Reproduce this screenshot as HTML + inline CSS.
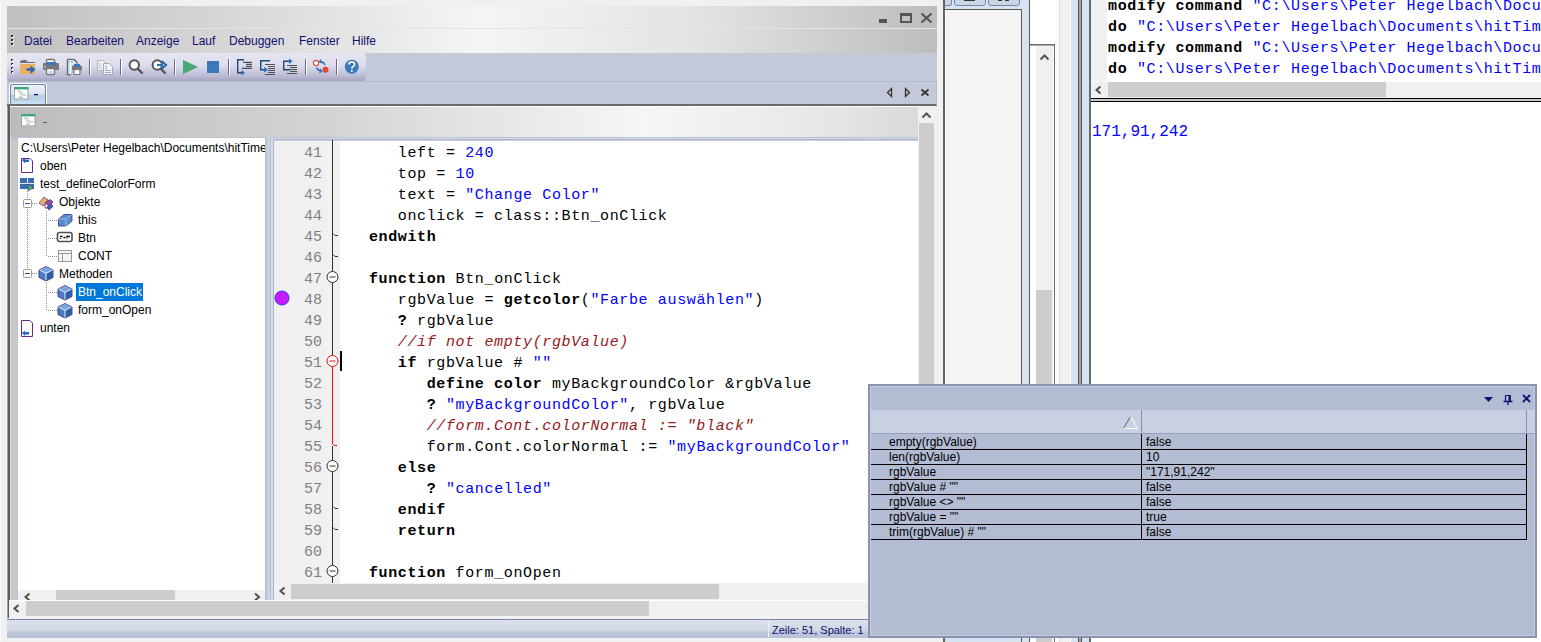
<!DOCTYPE html>
<html><head><meta charset="utf-8">
<style>
*{margin:0;padding:0;box-sizing:border-box}
html,body{width:1541px;height:642px;overflow:hidden;background:#f0f0f0;font-family:"Liberation Sans",sans-serif;position:relative}
.a{position:absolute}
.mono{font-family:"Liberation Mono",monospace}
.gt{background:linear-gradient(90deg,#c0c0c0 0%,#d8d8d8 25%,#f5f5f5 51%,#e2e2e2 75%,#bdbdbd 100%)}
.gt2{background:linear-gradient(90deg,#bcbcbc 0%,#d4d4d4 35%,#f6f6f6 70%,#e8e8e8 88%,#dadada 100%)}
.code{position:absolute;left:341px;font-family:"Liberation Mono",monospace;font-size:16px;line-height:21px;white-space:pre;color:#000}
.code div{height:21px}
.b{font-weight:bold}
.s{color:#0000ff}
.c{color:#961818;font-style:italic}
.ln{position:absolute;left:274px;width:48px;text-align:right;font-family:"Liberation Mono",monospace;font-size:15px;line-height:21px;color:#808080;white-space:pre}
.menu span{position:absolute;top:34px;font-size:12px;color:#10106e;line-height:14px}
.tree div{position:absolute;font-size:12px;line-height:16px;color:#000;white-space:nowrap}
.row{position:absolute;left:871px;width:656px;height:16px;border-bottom:1px solid #000;font-size:12px;line-height:14px;color:#000}
.row span{position:absolute;left:18px;top:1px}
.row i{position:absolute;left:275px;top:1px;font-style:normal}
</style></head><body>
<!-- left gradient strip on far left -->
<div class="a" style="left:0;top:0;width:1px;height:642px;background:#fafafa"></div>

<!-- ===== MAIN WINDOW ===== -->
<div class="a gt" style="left:7px;top:6px;width:930px;height:22px"></div>
<div class="a" style="left:7px;top:28px;width:930px;height:1px;background:#e4e4e4"></div>
<div class="a gt" style="left:7px;top:29px;width:930px;height:24px"></div>
<!-- title buttons -->
<div class="a" style="left:879px;top:19px;width:8px;height:4px;background:#555"></div>
<div class="a" style="left:900px;top:13px;width:12px;height:10px;border:2px solid #555;border-top-width:3px"></div>
<svg class="a" style="left:920px;top:12px" width="13" height="12"><path d="M1.5 1.5 L11.5 10.5 M11.5 1.5 L1.5 10.5" stroke="#555" stroke-width="2.2"/></svg>

<!-- menu -->
<div class="a" style="left:12px;top:36px;width:2px;height:11px;background:repeating-linear-gradient(#fff 0 2px,transparent 2px 4px)"></div><div class="a" style="left:11px;top:35px;width:2px;height:11px;background:repeating-linear-gradient(#2a2a5a 0 2px,transparent 2px 4px)"></div>
<div class="menu">
<span style="left:24px">Datei</span><span style="left:66px">Bearbeiten</span><span style="left:136px">Anzeige</span><span style="left:192px">Lauf</span><span style="left:229px">Debuggen</span><span style="left:299px">Fenster</span><span style="left:352px">Hilfe</span>
</div>

<!-- toolbar strip bg -->
<div class="a" style="left:7px;top:53px;width:930px;height:52px;background:#c4c9d9"></div>
<div class="a" style="left:7px;top:53px;width:359px;height:28px;border-radius:3px;background:linear-gradient(#e6e6f2 0%,#dcdcec 45%,#b8b8d2 85%,#a4a4c0 100%)"></div>


<!-- toolbar icons -->
<svg class="a" style="left:7px;top:53px" width="360" height="28" viewBox="7 53 360 28">
 <g fill="#2a2a5a"><rect x="11" y="59" width="2" height="2"/><rect x="11" y="63" width="2" height="2"/><rect x="11" y="67" width="2" height="2"/><rect x="11" y="71" width="2" height="2"/></g>
 <g fill="#fff"><rect x="12" y="60" width="1.5" height="1.5"/><rect x="12" y="64" width="1.5" height="1.5"/><rect x="12" y="68" width="1.5" height="1.5"/><rect x="12" y="72" width="1.5" height="1.5"/></g>
 <!-- folder -->
 <path d="M20 61.5 Q21 60 23 60 H26 L28 62 H35 V63 H20 Z" fill="#707070"/>
 <rect x="20" y="64" width="15" height="10" rx="1" fill="#e8b060"/>
 <path d="M26.5 69.5 H32" stroke="#2a6ab8" stroke-width="2.6"/>
 <path d="M30.5 65.5 L35.5 69.5 L30.5 74 Z" fill="#2a6ab8"/>
 <!-- printer -->
 <rect x="46.5" y="59.5" width="8" height="5" rx="1" fill="#fff" stroke="#777" stroke-width="1.4"/>
 <rect x="43" y="63" width="16" height="7" rx="1" fill="#787878"/>
 <rect x="46" y="62" width="10" height="3" fill="#3a78c0"/>
 <rect x="46.5" y="68.5" width="8" height="6" rx="1" fill="#fff" stroke="#777" stroke-width="1.4"/>
 <path d="M48.5 72 H52.5" stroke="#5a8ad0" stroke-width="0.8"/>
 <rect x="44" y="66.5" width="2" height="1" fill="#ccc"/>
 <!-- print preview -->
 <path d="M67.5 59.5 H74 L77 62.5 V64 M67.5 59.5 V74.5 H71" fill="#fff" stroke="#707070" stroke-width="1.3"/>
 <rect x="68" y="60" width="3" height="14" fill="#fff"/>
 <path d="M69 60.5 V74 M68.5 61.5 H73.5" stroke="#70c0f0" stroke-width="0.9"/>
 <path d="M67.5 59.5 H74 L77 62.5 M67.5 59.5 V74.5 H70" fill="none" stroke="#6a6a6a" stroke-width="1.2"/>
 <rect x="72" y="65.5" width="10" height="5" rx="1" fill="#777"/>
 <rect x="74" y="64" width="6" height="3" fill="#3a78c0"/>
 <rect x="74" y="69.5" width="6" height="5" rx="1" fill="#fff" stroke="#777" stroke-width="1.2"/>
 <!-- separators -->
 <g><path d="M89.5 59 V75 M120.5 59 V75 M174.5 59 V75 M228.5 59 V75 M305.5 59 V75 M336.5 59 V75" stroke="#6a6a8a" stroke-width="1"/>
 <path d="M90.5 59 V75 M121.5 59 V75 M175.5 59 V75 M229.5 59 V75 M306.5 59 V75 M337.5 59 V75" stroke="#fff" stroke-width="1"/></g>
 <!-- copy disabled -->
 <path d="M97.5 60.5 H103 L105 62.5 V70.5 H97.5 Z" fill="#f2f2f6" stroke="#b4b4c0"/>
 <path d="M99 64 H101 M99 66 H101 M99 68 H102" stroke="#a8b8d8"/>
 <path d="M103.5 63.5 H109.5 L112.5 66.5 V74.5 H103.5 Z" fill="#f4f4f8" stroke="#a8a8b4"/>
 <path d="M105 66.5 H107 M105 68.5 H107 M105 70.5 H111 M105 72.5 H111" stroke="#90a8d4"/>
 <!-- search -->
 <circle cx="134.3" cy="65" r="4.7" fill="#fff" stroke="#555" stroke-width="2"/>
 <path d="M137.5 68.5 L142.5 73.5" stroke="#555" stroke-width="2.4"/>
 <!-- search next -->
 <circle cx="157.3" cy="65" r="4.7" fill="#fff" stroke="#555" stroke-width="2"/>
 <path d="M160.5 68.5 L165.5 73.5" stroke="#555" stroke-width="2.4"/>
 <path d="M157 65 H163" stroke="#2a6ab8" stroke-width="2"/>
 <path d="M161.5 61 L166 65 L161.5 69" stroke="#2a6ab8" stroke-width="2.2" fill="none"/>
 <!-- play -->
 <path d="M183 60 L198 67 L183 74 Z" fill="#48a878"/>
 <!-- stop -->
 <rect x="207" y="61" width="12" height="12" fill="#3a78b8"/>
 <!-- indent icons -->
 <g stroke="#1e4a78" stroke-width="1.4" fill="none">
  <path d="M244 59.8 H237.7 V72.8 H242"/>
  <path d="M270 60.8 H260.7 V69.8 H264"/>
  <path d="M290 69.8 H283.7 V61.3 H289"/>
 </g>
 <g fill="#2a6ab8"><path d="M241.5 70 L245 72.8 L241.5 75.6 Z"/><path d="M264 67 L268 69.8 L264 72.6 Z"/><path d="M289 58.5 L292.5 61.3 L289 64 Z"/></g>
 <g stroke="#505050" stroke-width="1.2">
  <path d="M243 62.3 H252 M246 64.3 H252 M246 66.3 H252 M242 68.3 H252"/>
  <path d="M265 64.5 H275 M268 66.5 H275 M268 68.5 H275 M268 70.5 H275 M268 72.5 H275 M265 74.5 H275"/>
  <path d="M287 65.5 H297 M290 67.5 H297 M290 69.5 H297 M290 71.5 H297 M287 73.5 H297"/>
 </g>
 <!-- breakpoints -->
 <circle cx="316" cy="63" r="2.6" fill="#fff" stroke="#e05040" stroke-width="1.2"/>
 <circle cx="325.5" cy="69.8" r="3" fill="#e04a30"/>
 <path d="M325 65 Q324 62 320.5 61.5" stroke="#2a6ab8" stroke-width="1.3" fill="none"/><path d="M321 59.5 L319.5 61.8 L322 63" stroke="#2a6ab8" stroke-width="1.2" fill="none"/>
 <path d="M316.5 67.5 Q317.5 70.5 321 71" stroke="#2a6ab8" stroke-width="1.3" fill="none"/><path d="M320 69 L321.5 71 L319.5 73" stroke="#2a6ab8" stroke-width="1.2" fill="none"/>
 <!-- help -->
 <circle cx="351.8" cy="66.8" r="7" fill="#3a78b8"/>
 <path d="M349 64.5 Q349 62 351.8 62 Q354.6 62 354.6 64.5 Q354.6 66 352.8 66.8 Q351.8 67.3 351.8 68.8" stroke="#fff" stroke-width="1.6" fill="none"/>
 <rect x="350.9" y="70" width="1.8" height="1.8" fill="#fff"/>
</svg>
<!-- tab strip -->
<div class="a" style="left:7px;top:81px;width:930px;height:1px;background:#b4bacc"></div>
<div class="a" style="left:9px;top:83px;width:38px;height:22px;border:1px solid #fff;border-bottom:none;border-radius:4px 4px 0 0"></div><div class="a" style="left:10px;top:84px;width:36px;height:21px;border:1px solid #6e86b0;border-bottom:none;border-radius:3px 3px 0 0;background:linear-gradient(#eef2f8 0%,#dde4f0 45%,#bccde4 52%,#c0d6ea 80%,#c8eef6 100%)"></div>
<div class="a" style="left:7px;top:104px;width:930px;height:2px;background:#6a6a6a"></div>

<!-- child window -->
<div class="a" style="left:7px;top:106px;width:1px;height:512px;background:#a0a0a8"></div><div class="a" style="left:8px;top:106px;width:2px;height:512px;background:#5a5a64"></div>
<div class="a" style="left:10px;top:106px;width:927px;height:512px;background:#c8c8c8"></div>
<div class="a" style="left:10px;top:106px;width:927px;height:1px;background:#fff"></div>
<div class="a gt2" style="left:11px;top:107px;width:907px;height:30px"></div>
<div class="a" style="left:11px;top:137px;width:907px;height:3px;background:#b8c4d4"></div>


<!-- tab icon / title icon -->
<svg class="a" style="left:0;top:80px" width="940" height="60" viewBox="0 80 940 60">
 <defs><g id="fi"><rect x="0.5" y="0.5" width="13.5" height="11.5" fill="#fff" stroke="#a0a0a0"/><rect x="0" y="0" width="14.5" height="2.4" fill="#40a878"/>
 <path d="M3 4 H6.5 L8.5 7 L10 8 H12.5 M4.5 5 L7.5 8.5 L5 10.5 H9" stroke="#b8b8b8" stroke-width="1" fill="none"/><circle cx="7.5" cy="6" r="1" fill="#ccc"/><circle cx="9.5" cy="8" r="1" fill="#ccc"/></g></defs>
 <use href="#fi" x="14" y="87"/>
 <rect x="34" y="94" width="4" height="1.2" fill="#10106a"/>
 <use href="#fi" x="21" y="114"/>
 <rect x="43" y="122" width="4" height="1" fill="#606080"/>
 <g stroke="#333" stroke-width="1.3" fill="none" stroke-linejoin="miter">
  <path d="M891.5 88.5 V96.5 L887.5 92.5 Z"/>
  <path d="M905.5 88.5 V96.5 L909.5 92.5 Z"/>
  <path d="M921.5 89.5 L928.5 95.5 M928.5 89.5 L921.5 95.5" stroke-width="1.7"/>
 </g>
</svg>
<div class="a" style="left:936px;top:81px;width:1px;height:24px;background:#b0bccc"></div>
<div class="a" style="left:10px;top:137px;width:1px;height:463px;background:#dcdcdc"></div>
<!-- tree panel -->
<div class="a" style="left:17px;top:137px;width:250px;height:463px;background:#b8c4d4"></div>
<div class="a" style="left:18px;top:138px;width:247px;height:462px;background:#fff"></div>
<!-- splitter -->
<div class="a" style="left:267px;top:137px;width:3px;height:463px;background:#c8d2e0"></div>

<!-- editor panel -->
<div class="a" style="left:270px;top:137px;width:648px;height:463px;background:#b8c4d4"></div>
<div class="a" style="left:271px;top:138px;width:647px;height:462px;background:#d4dce8"></div>
<div class="a" style="left:273px;top:139px;width:645px;height:461px;background:#aab6c8"></div>
<div class="a" style="left:274px;top:140px;width:644px;height:443px;background:#fff"></div>
<div class="a" style="left:274px;top:140px;width:51px;height:443px;background:#f0f0f0"></div>
<div class="a" style="left:325px;top:140px;width:15px;height:443px;background:repeating-conic-gradient(#e8e8e8 0 25%,#fafafa 0 50%) 0 0/2px 2px"></div>

<div class="a" style="left:274px;top:140px;width:644px;height:443px;overflow:hidden">
<div class="code" style="left:66px;top:3px;letter-spacing:0.63px;font-size:15px"><div>      left = <span class="s">240</span></div><div>      top = <span class="s">10</span></div><div>      text = <span class="s">"Change Color"</span></div><div>      onclick = class::Btn_onClick</div><div>   <span class="b">endwith</span></div><div></div><div>   <span class="b">function</span> Btn_onClick</div><div>      rgbValue = <span class="b">getcolor</span>(<span class="s">"Farbe auswählen"</span>)</div><div>      <span class="b">?</span> rgbValue</div><div>      <span class="c">//if not empty(rgbValue)</span></div><div>      <span class="b">if</span> rgbValue # <span class="s">""</span></div><div>         <span class="b">define color</span> myBackgroundColor &amp;rgbValue</div><div>         <span class="b">?</span> <span class="s">"myBackgroundColor"</span>, rgbValue</div><div>         <span class="c">//form.Cont.colorNormal := "black"</span></div><div>         form.Cont.colorNormal := <span class="s">"myBackgroundColor"</span></div><div>      <span class="b">else</span></div><div>         <span class="b">?</span> <span class="s">"cancelled"</span></div><div>      <span class="b">endif</span></div><div>      <span class="b">return</span></div><div></div><div>   <span class="b">function</span> form_onOpen</div></div>
<div class="ln" style="left:0;top:3px"><div>41</div><div>42</div><div>43</div><div>44</div><div>45</div><div>46</div><div>47</div><div>48</div><div>49</div><div>50</div><div>51</div><div>52</div><div>53</div><div>54</div><div>55</div><div>56</div><div>57</div><div>58</div><div>59</div><div>60</div><div>61</div></div>
</div>

<div class="a" style="left:274px;top:140px;width:644px;height:1px;background:#c8d0dc"></div>
<!-- fold margin -->
<svg class="a" style="left:274px;top:140px" width="644" height="443" viewBox="274 140 644 443">
 <g stroke="#333" stroke-width="1" fill="none">
  <path d="M332.5 140 V272 M332.5 282 V356 M332.5 446 V461 M332.5 471 V566 M332.5 576 V583"/>
  <path d="M333 233.5 L335 235.5 H338 M333 254.5 L335 256.5 H338 M333 506.5 L335 508.5 H338 M333 527.5 L335 529.5 H338"/>
  <circle cx="332.5" cy="277" r="5.5" fill="#fff"/><path d="M329.5 277 H335.5"/>
  <circle cx="332.5" cy="466" r="5.5" fill="#fff"/><path d="M329.5 466 H335.5"/>
  <circle cx="332.5" cy="571" r="5.5" fill="#fff"/><path d="M329.5 571 H335.5"/>
 </g>
 <g stroke="#e81010" stroke-width="1" fill="none">
  <path d="M332.5 366 V444 L334.5 445.5 H337"/>
  <circle cx="332.5" cy="361" r="5.5" fill="#fff"/><path d="M329.5 361 H335.5"/>
 </g>
 <circle cx="282" cy="298" r="7" fill="#c41cff" stroke="#3a2aff" stroke-width="1"/>
 <rect x="340" y="351" width="2" height="20" fill="#000"/>
</svg>
<!-- editor hscroll -->
<div class="a" style="left:274px;top:583px;width:644px;height:17px;background:#f0f0f0"></div>
<div class="a" style="left:291px;top:584px;width:428px;height:15px;background:#cdcdcd"></div>
<svg class="a" style="left:278px;top:586px" width="10" height="10"><path d="M6.5 1.5 L2.5 5 L6.5 8.5" stroke="#505050" stroke-width="2" fill="none"/></svg>
<!-- editor vscroll -->
<div class="a" style="left:918px;top:106px;width:19px;height:512px;background:#f0f0f0"></div>
<div class="a" style="left:919px;top:123px;width:15px;height:477px;background:#cdcdcd"></div>
<svg class="a" style="left:921px;top:111px" width="11" height="8"><path d="M1.5 6.5 L5.5 2.5 L9.5 6.5" stroke="#555" stroke-width="2" fill="none"/></svg>



<!-- ===== RIGHT PANELS ===== -->
<!-- panel A -->
<div class="a" style="left:943px;top:0;width:2px;height:642px;background:#646464"></div>
<div class="a" style="left:945px;top:0;width:84px;height:642px;background:#d6e3f0"></div>
<div class="a" style="left:945px;top:9px;width:77px;height:1px;background:#5a5a5a"></div>
<div class="a" style="left:945px;top:10px;width:76px;height:628px;background:#f4f4f4;border-left:1px solid #fff"></div>
<div class="a" style="left:1021px;top:9px;width:1px;height:633px;background:#5a5a5a"></div>
<div class="a" style="left:945px;top:-6px;width:7px;height:12px;border:1.5px solid #7a86a8;border-left:none;border-radius:0 3px 3px 0;background:#c8d6e6"></div>
<div class="a" style="left:954px;top:-6px;width:32px;height:12px;border:1.5px solid #7a86a8;border-radius:3px;background:#c8d6e6"></div>
<div class="a" style="left:988px;top:-6px;width:32px;height:12px;border:1.5px solid #7a86a8;border-radius:3px;background:#c8d6e6"></div>
<div class="a" style="left:964px;top:0;width:11px;height:1px;background:#333"></div>
<div class="a" style="left:998px;top:0;width:4px;height:1px;background:#333"></div>
<div class="a" style="left:1005px;top:0;width:4px;height:1px;background:#333"></div>
<div class="a" style="left:1029px;top:0;width:1px;height:642px;background:#5a5a5a"></div>
<!-- panel B -->
<div class="a" style="left:1030px;top:0;width:29px;height:642px;background:#fff"></div>
<div class="a" style="left:1030px;top:44px;width:25px;height:1px;background:#6a6a6a"></div>
<div class="a" style="left:1030px;top:45px;width:24px;height:1px;background:#a8a8a8"></div>
<div class="a" style="left:1054px;top:44px;width:1px;height:598px;background:#6a6a6a"></div>
<div class="a" style="left:1036px;top:46px;width:17px;height:596px;background:#f0f0f0"></div>
<div class="a" style="left:1036px;top:290px;width:16px;height:352px;background:#cdcdcd"></div>
<svg class="a" style="left:1039px;top:53px" width="11" height="8"><path d="M1.5 6.5 L5.5 2.5 L9.5 6.5" stroke="#555" stroke-width="2" fill="none"/></svg>
<div class="a" style="left:1059px;top:0;width:1px;height:642px;background:#dadada"></div>
<!-- panel C -->
<div class="a" style="left:1070px;top:0;width:1px;height:642px;background:#fff"></div>
<div class="a" style="left:1071px;top:0;width:7px;height:642px;background:#d6e3f0"></div>
<div class="a" style="left:1078px;top:0;width:4px;height:642px;background:#a8a8a8;border-left:1px solid #555;border-right:1px solid #555"></div>
<div class="a" style="left:1082px;top:0;width:7px;height:642px;background:#d6e3f0"></div>
<div class="a" style="left:1089px;top:0;width:2px;height:642px;background:#6a6a6a"></div>
<!-- panel D -->
<div class="a" style="left:1091px;top:0;width:450px;height:642px;background:#fff"></div>
<div class="a" style="left:1091px;top:0;width:16px;height:81px;background:#f0f0f0"></div>
<div class="a" style="left:1091px;top:82px;width:450px;height:16px;background:#f0f0f0"></div>
<div class="a" style="left:1108px;top:82px;width:278px;height:15px;background:#cdcdcd"></div>
<svg class="a" style="left:1094px;top:85px" width="10" height="10"><path d="M6.5 1.5 L2.5 5 L6.5 8.5" stroke="#505050" stroke-width="2" fill="none"/></svg>
<div class="a" style="left:1091px;top:98px;width:450px;height:4px;border-top:1px solid #000;border-bottom:1px solid #000;background:#c8c8c8"></div>
<div class="a mono" style="left:1108px;top:-4px;font-size:15px;letter-spacing:0.63px;line-height:21px;white-space:pre;color:#000;height:85px;overflow:hidden"><div><span class="b">modify command</span> <span class="s">"C:\Users\Peter Hegelbach\Documents\hitTime"</span></div><div><span class="b">do</span> <span class="s">"C:\Users\Peter Hegelbach\Documents\hitTime"</span></div><div><span class="b">modify command</span> <span class="s">"C:\Users\Peter Hegelbach\Documents\hitTime"</span></div><div><span class="b">do</span> <span class="s">"C:\Users\Peter Hegelbach\Documents\hitTime"</span></div></div>
<div class="a mono" style="left:1092px;top:122px;font-size:16px;line-height:21px;white-space:pre;color:#0000ff">171,91,242</div>
<!-- tree content -->
<div class="tree">
<div style="left:21px;top:140px;width:244px;overflow:hidden">C:\Users\Peter Hegelbach\Documents\hitTime</div>
<div style="left:40px;top:158px">oben</div>
<div style="left:40px;top:176px">test_defineColorForm</div>
<div style="left:59px;top:194px">Objekte</div>
<div style="left:78px;top:212px">this</div>
<div style="left:78px;top:230px">Btn</div>
<div style="left:78px;top:248px">CONT</div>
<div style="left:59px;top:266px">Methoden</div>
<div style="left:76px;top:283px;width:67px;height:18px;background:#0078d7;color:#fff;padding-left:2px;line-height:18px">Btn_onClick</div>
<div style="left:78px;top:302px">form_onOpen</div>
<div style="left:40px;top:320px">unten</div>
</div>
<svg class="a" style="left:18px;top:138px" width="247" height="210" viewBox="18 138 247 210">
 <g stroke="#8c8c8c" stroke-width="1" stroke-dasharray="1 1" fill="none">
  <path d="M27.5 191 V269"/><path d="M32 203.5 H38"/><path d="M32 273.5 H38"/>
  <path d="M46.5 211 V256 M48 220.5 H57 M48 238.5 H57 M48 256.5 H57"/>
  <path d="M46.5 283 V310 M48 292.5 H57 M48 310.5 H57"/>
 </g>
 <!-- expanders -->
 <g><rect x="23.5" y="199.5" width="8" height="8" fill="#fff" stroke="#9a9a9a" rx="1"/><path d="M25 203.5 H30" stroke="#3050a0"/>
 <rect x="23.5" y="269.5" width="8" height="8" fill="#fff" stroke="#9a9a9a" rx="1"/><path d="M25 273.5 H30" stroke="#3050a0"/></g>
 <!-- oben icon -->
 <path d="M21.5 158.5 H30 L32.5 161 V172.5 H21.5 Z" fill="#fff" stroke="#6a2a8a"/>
 <path d="M22 160 L25 158 V159.5 H29 V162 H25 V163.5 Z" fill="#3060c0"/>
 <!-- test_define icon -->
 <rect x="20" y="178" width="14" height="11" fill="#3a6cb0"/><path d="M20 183.5 H34 M27.5 178 V183" stroke="#dde6f0" stroke-width="1"/>
 <path d="M28 184 L34 187.5 L28 191 Z" fill="#40b070" stroke="#602080" stroke-width="0.6"/>
 <!-- Objekte icon -->
 <path d="M39 203 L44 197 L48 200 L43 206 Z" fill="#e8b060" stroke="#7a3a90" stroke-width="0.8"/>
 <path d="M45 203 L50 199.5 L53 202 L49 206 Z" fill="#9050b0" stroke="#602080" stroke-width="0.8"/>
 <path d="M47 207 L51 204 L53 206.5 L49 210 Z" fill="#3a6cb0" stroke="#602080" stroke-width="0.8"/>
 <path d="M45 204 V208 H48" stroke="#602080" fill="none" stroke-width="0.8"/>
 <!-- this icon: slab -->
 <path d="M58.5 219 L64 214.5 H72 V221 L66 226 H58.5 Z" fill="#5a8cd0" stroke="#4a2a7a" stroke-width="0.8"/>
 <path d="M58.5 219 H66 L72 214.5 M66 219 V226" stroke="#a8c4ec" stroke-width="0.8" fill="none"/>
 <!-- Btn icon -->
 <rect x="57.5" y="232.5" width="14.5" height="9" rx="2" fill="#fff" stroke="#505050" stroke-width="1.6"/>
 <path d="M60 236.5 H62.5 M63.5 237.5 H65.5 M66.5 236.5 H70" stroke="#111" stroke-width="1.6"/><path d="M60 238.5 H61 M67 235.5 V238.5" stroke="#111" stroke-width="1"/>
 <!-- CONT icon -->
 <rect x="58.5" y="250.5" width="13" height="11" fill="#f4f4f4" stroke="#9a9a9a"/><path d="M58.5 253.5 H71.5 M62.5 253.5 V261.5" stroke="#9a9a9a"/>
 <!-- cube icons -->
 <g id="cube"><path d="M39 270 L46 266.5 L53 270 V277.5 L46 281 L39 277.5 Z" fill="#4a7cc0" stroke="#4a2a7a" stroke-width="0.9"/><path d="M46 273.5 L53 270 V277.5 L46 281 Z" fill="#2f5fa8"/><path d="M39.5 270 L46 266.8 L52.5 270 L46 273.5 Z" fill="#7aa6e0"/><path d="M39.5 270 L46 273.5 L52.5 270 M46 273.5 V280.5" stroke="#e0ecfa" stroke-width="1" fill="none"/></g>
 <use href="#cube" x="19" y="19"/>
 <use href="#cube" x="19" y="37"/>
 <!-- unten icon -->
 <path d="M21.5 320.5 H30 L32.5 323 V336.5 H21.5 Z" fill="#fff" stroke="#6a2a8a"/>
 <path d="M22 333 L25 330.5 V332 H29 V334.5 H25 V336 Z" fill="#3060c0"/>
</svg>


<!-- tree hscroll (cut) -->
<div class="a" style="left:18px;top:590px;width:247px;height:10px;background:#f0f0f0"></div>
<div class="a" style="left:56px;top:590px;width:119px;height:10px;background:#cdcdcd"></div>
<svg class="a" style="left:18px;top:590px" width="247" height="10"><path d="M11.5 3.5 L7.5 7 L11.5 10.5 M237 3.5 L241 7 L237 10.5" stroke="#505050" stroke-width="2" fill="none"/></svg>
<!-- outer hscroll -->
<div class="a" style="left:9px;top:600px;width:909px;height:18px;background:#f0f0f0;border-top:1px solid #fff;border-bottom:1px solid #fafafa"></div>
<div class="a" style="left:26px;top:601px;width:623px;height:15px;background:#cdcdcd"></div>
<svg class="a" style="left:12px;top:603px" width="10" height="12"><path d="M6.5 2 L2.5 5.5 L6.5 9" stroke="#505050" stroke-width="2" fill="none"/></svg>
<!-- status bar -->
<div class="a" style="left:7px;top:618px;width:861px;height:1px;background:#e8ecf4"></div>
<div class="a" style="left:7px;top:619px;width:861px;height:1px;background:#7888a8"></div>
<div class="a" style="left:7px;top:620px;width:861px;height:18px;background:linear-gradient(#dce1eb 0%,#d2d8e4 55%,#bec6da 70%,#b8c2d8 100%)"></div>
<div class="a" style="left:768px;top:621px;width:1px;height:16px;background:#a8b0c4;border-right:1px solid #eef0f6"></div>
<div class="a" style="left:772px;top:623px;font-size:11px;line-height:14px;color:#10106a;white-space:nowrap">Zeile: 51, Spalte: 1</div>
<!-- ===== DOCK PANEL ===== -->
<div class="a" style="left:868px;top:384px;width:669px;height:254px;background:#8a92b0"></div>
<div class="a" style="left:870px;top:386px;width:665px;height:250px;background:#b4bcd4;border:1px solid #c6cce0"></div>
<div class="a" style="left:871px;top:410px;width:664px;height:23px;background:#c8d0e2"></div>
<div class="a" style="left:871px;top:433px;width:664px;height:1px;background:#98a0bc"></div>
<div class="a" style="left:1526px;top:410px;width:1px;height:23px;background:#8890b0"></div>
<div class="a" style="left:1141px;top:410px;width:1px;height:23px;background:#8890b0"></div>
<svg class="a" style="left:1122px;top:415px" width="18" height="15"><path d="M1.5 13.5 L8.5 1.5" stroke="#606070" stroke-width="1" fill="none"/><path d="M8.5 1.5 L15.5 13.5 H1.5" stroke="#fff" stroke-width="1" fill="none"/></svg>
<svg class="a" style="left:1482px;top:393px" width="50" height="12">
 <path d="M2 4 H11 L6.5 9 Z" fill="#101070"/>
 <path d="M23.5 2.5 H28 V8 M23.5 2.5 V8" stroke="#101070" stroke-width="1.2" fill="none"/><rect x="26.5" y="2" width="2.2" height="6" fill="#101070"/><path d="M21.5 8.5 H30.5 M26 8.5 V12" stroke="#101070" stroke-width="1.3"/>
 <path d="M41 2 L48 9 M48 2 L41 9" stroke="#101070" stroke-width="1.8"/>
</svg>
<div class="a" style="left:1526px;top:434px;width:1px;height:106px;background:#000"></div>
<div class="a" style="left:1141px;top:434px;width:1px;height:106px;background:#000"></div>
<div class="row" style="top:434px"><span>empty(rgbValue)</span><i>false</i></div>
<div class="row" style="top:449px"><span>len(rgbValue)</span><i>10</i></div>
<div class="row" style="top:464px"><span>rgbValue</span><i>"171,91,242"</i></div>
<div class="row" style="top:479px"><span>rgbValue # ""</span><i>false</i></div>
<div class="row" style="top:494px"><span>rgbValue &lt;&gt; ""</span><i>false</i></div>
<div class="row" style="top:509px"><span>rgbValue = ""</span><i>true</i></div>
<div class="row" style="top:524px"><span>trim(rgbValue) # ""</span><i>false</i></div>
</body></html>
